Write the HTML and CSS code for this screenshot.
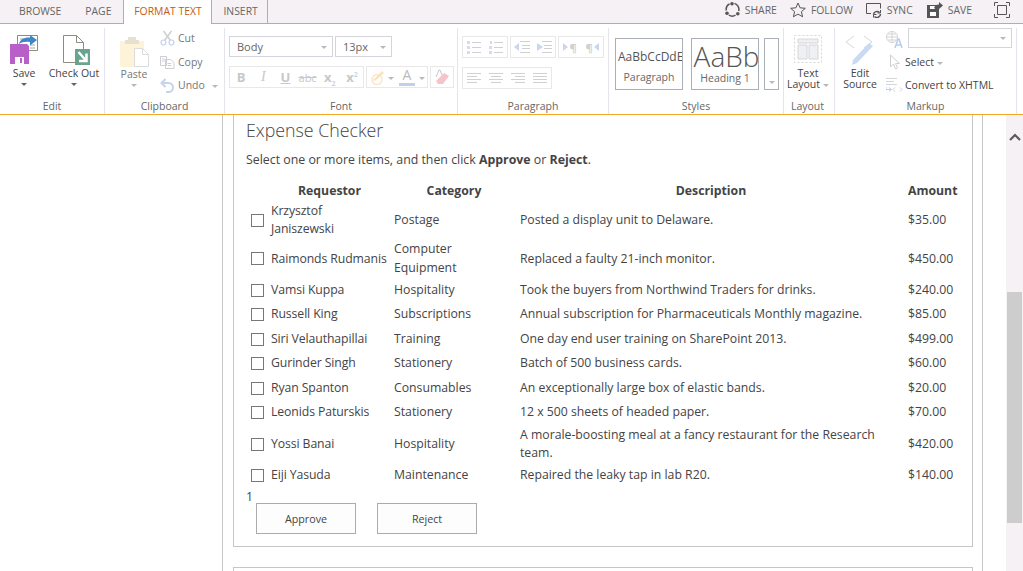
FILE: index.html
```html
<!DOCTYPE html>
<html lang="en">
<head>
   <meta charset="UTF-8">
   <title>Expense Checker</title>
   <link rel="stylesheet" href="styles.css">
</head>
<body>

   <!-- top tabs -->
   <div class="topbar">
      <div class="tabs">
         <a class="tab first">BROWSE</a>
         <a class="tab">PAGE</a>
         <a class="tab active">FORMAT TEXT</a>
         <a class="tab last">INSERT</a>
      </div>
      <div class="actions">
         <a class="action share">
            <svg width="15" height="15" viewBox="0 0 15 15" fill="none" stroke="#555" stroke-width="1.500"><path d="M4.500 1.800A6.300 6.300 0 0 0 1.300 8.500"/><path d="M3.800 13A6.300 6.300 0 0 0 10.500 13.200"/><path d="M13.700 9A6.300 6.300 0 0 0 9.500 1.400"/><circle cx="7" cy="1.800" r="1.800" fill="#555" stroke="none"/><circle cx="2" cy="11.200" r="1.800" fill="#555" stroke="none"/><circle cx="12.800" cy="11.800" r="1.800" fill="#555" stroke="none"/></svg>
            SHARE</a>
         <a class="action follow">
            <svg width="16" height="16" viewBox="0 0 16 16" fill="none" stroke="#555"><path d="M8 1l2.100 4.800 5.200.5-3.900 3.400 1.200 5.100L8 12.100l-4.600 2.700 1.200-5.100L.7 6.300l5.200-.5z"/></svg>
            FOLLOW</a>
         <a class="action sync">
            <svg width="16" height="16" viewBox="0 0 16 16" fill="none" stroke="#555"><path d="M5 11.500H.5v-10h14v5"/><path d="M7.500 12.500a3.500 3.500 0 0 1 6-2M14.500 12a3.500 3.500 0 0 1-6 2.500" stroke-width="1.500"/><path d="M14.500 8v3h-3M7.500 15.500v-3h3"/></svg>
            SYNC</a>
         <a class="action save">
            <svg width="16" height="16" viewBox="0 0 16 16"><path d="M0 3h12v13H0z" fill="#555"/><path d="M3 4h5v3H3zM3 10h6v4H3z" fill="#fff"/><path d="M7 7c0-3 2-4.500 5-4.500V0l4 3.500L12 7V4.500C10 4.500 8 5 7 7z" fill="#555"/></svg>
            SAVE</a>
         <a class="action focus">
            <svg width="16" height="16" viewBox="0 0 16 16" fill="none" stroke="#555"><path d="M.5 4V.5H4M12 .5h3.500V4M15.500 12v3.500H12M4 15.500H.5V12"/><path d="M3.500 3.500h9v9h-9z"/></svg>
         </a>
      </div>
   </div>

   <!-- ribbon -->
   <div class="ribbon">

      <div class="group group-edit">
         <div class="group-body">
            <div class="big-btn btn-save">
               <svg width="28" height="29" viewBox="0 0 28 29"><path d="M7.500.5h20v15h-20z" fill="#fff" stroke="#8c8c80"/><path d="M10 4h7M20 13h5M20 10h5" stroke="#a8a8a0"/><path d="M9 9c1-5 6-7 11-6.500V0l7 5-7 5.500V7C15 6.500 12 7 9 9z" fill="#3f86c4"/><path d="M0 9h17l2 2v18H0z" fill="#b860c8"/><path d="M5 22h9v7H5z" fill="#fff"/><path d="M10 23h2v5h-2z" fill="#b860c8"/></svg>
               <span class="big-label">Save</span>
               <i class="arrow dark"></i>
            </div>
            <div class="big-btn btn-checkout">
               <svg width="28" height="31" viewBox="0 0 28 31"><path d="M.5.5h13l7 7v20H.5z" fill="#fff" stroke="#8c8c80"/><path d="M13.500.5v7h7" fill="none" stroke="#8c8c80"/><path d="M12 14h15v16H12z" fill="#68a48e"/><path d="M15.500 17l7 8M23.500 18.500v7.500H16" fill="none" stroke="#fff" stroke-width="2.500"/></svg>
               <span class="big-label">Check Out</span>
               <i class="arrow dark"></i>
            </div>
         </div>
         <div class="group-label">Edit</div>
      </div>

      <div class="group group-clipboard">
         <div class="group-body">
            <div class="big-btn btn-paste disabled">
               <svg width="29" height="30" viewBox="0 0 29 30"><path d="M0 4h24v26H0z" fill="#fdf3d9"/><path d="M8 0h8v3h3v4H5V3h3z" fill="#e6e0d0"/><path d="M14.500 11.500h8l6 6v12h-14z" fill="#fff" stroke="#dcdcdc"/><path d="M22.500 11.500v6h6" fill="none" stroke="#dcdcdc"/></svg>
               <span class="big-label">Paste</span>
               <i class="arrow"></i>
            </div>
            <div class="small-col">
               <div class="small-btn btn-cut">
                  <svg width="15" height="16" viewBox="0 0 15 16" fill="none" stroke="#c6d2ea" stroke-width="1.200"><circle cx="3.500" cy="12.500" r="2.500"/><circle cx="11.500" cy="12.500" r="2.500"/><path d="M4.500 10.500L11.500 1M10.500 10.500L3.500 1" stroke="#cfcfcf" stroke-width="1.500"/></svg>
                  <span>Cut</span>
               </div>
               <div class="small-btn btn-copy">
                  <svg width="15" height="14" viewBox="0 0 15 14" fill="none" stroke="#cfcfcf"><path d="M.5 1.500h6v9h-6zM5.500 4.500h5l3.500 3v6H5.500z" fill="#fff"/><path d="M7.500 8.500h4M7.500 10.500h4M2 4h3M2 6h3" stroke="#c6d2ea"/></svg>
                  <span>Copy</span>
               </div>
               <div class="small-btn btn-undo">
                  <svg width="15" height="15" viewBox="0 0 15 15" fill="none" stroke="#c4d4ee" stroke-width="2"><path d="M5.500 1L1.500 5l4 4M2 5h6.500a4.500 4.500 0 0 1 0 9H6"/></svg>
                  <span>Undo</span>
                  <i class="arrow"></i>
               </div>
            </div>
         </div>
         <div class="group-label">Clipboard</div>
      </div>

      <div class="group group-font">
         <div class="group-body rows">
            <div class="tool-row">
               <div class="select select-font">Body<i class="arrow"></i></div>
               <div class="select select-size">13px<i class="arrow"></i></div>
            </div>
            <div class="tool-row">
               <div class="tool-box box-format">
                  <span class="tool bold">B</span>
                  <span class="tool italic">I</span>
                  <span class="tool under">U</span>
                  <span class="tool strike">abc</span>
                  <span class="tool bold">x<sub>2</sub></span>
                  <span class="tool bold">x<sup>2</sup></span>
               </div>
               <div class="tool-box box-color">
                  <svg width="16" height="16" viewBox="0 0 16 16" fill="none"><circle cx="7" cy="10.500" r="5" stroke="#fbe7c8" stroke-width="1.500"/><path d="M3 11L12 2l2 2-9 8z" fill="#fbe2bd"/></svg>
                  <i class="arrow"></i>
                  <span class="font-color">A</span>
                  <i class="arrow"></i>
               </div>
               <div class="tool-box box-erase">
                  <svg width="15" height="16" viewBox="0 0 15 16"><path d="M3 15l-2-3 8-8 5 3-6 8z" fill="#f6c3cb"/><path d="M1 8l3-7h1l2 5" fill="none" stroke="#c8c8c8"/></svg>
               </div>
            </div>
         </div>
         <div class="group-label">Font</div>
      </div>

      <div class="group group-paragraph">
         <div class="group-body rows">
            <div class="tool-row">
               <div class="tool-box box-lists">
                  <svg width="14" height="14" viewBox="0 0 14 14"><path d="M5 2.500h9M5 7.500h9M5 12.500h9" stroke="#d0d0d0"/><path d="M0 1h3v3H0zM0 6h3v3H0zM0 11h3v3H0z" fill="#d3dcf0"/></svg>
                  <svg width="14" height="14" viewBox="0 0 14 14"><path d="M5 2.500h9M5 7.500h9M5 12.500h9" stroke="#d0d0d0"/><path d="M1 1h2v3H1zM0 6h3v3H0zM0 11h3v3H0z" fill="#d3dcf0"/></svg>
               </div>
               <div class="tool-box box-indent">
                  <svg width="16" height="12" viewBox="0 0 16 12"><path d="M6 .5h10M8 4.500h8M8 7.500h8M6 11.500h10" stroke="#d0d0d0"/><path d="M0 6l5-4v8z" fill="#c9d6ef"/></svg>
                  <svg width="16" height="12" viewBox="0 0 16 12"><path d="M6 .5h10M8 4.500h8M8 7.500h8M6 11.500h10" stroke="#d0d0d0"/><path d="M7 6L1 2v8z" fill="#c9d6ef"/></svg>
               </div>
               <div class="tool-box box-dir">
                  <span class="pilcrow"><b class="dir-arrow ltr"></b>¶</span>
                  <span class="pilcrow">¶<b class="dir-arrow rtl"></b></span>
               </div>
            </div>
            <div class="tool-row">
               <div class="tool-box box-align">
                  <svg width="14" height="11" viewBox="0 0 14 11"><path d="M0 .5h14M0 3.500h10M0 6.500h14M0 9.500h10" stroke="#d0d0d0"/></svg>
                  <svg width="14" height="11" viewBox="0 0 14 11"><path d="M0 .5h14M2 3.500h10M0 6.500h14M2 9.500h10" stroke="#d0d0d0"/></svg>
                  <svg width="14" height="11" viewBox="0 0 14 11"><path d="M0 .5h14M4 3.500h10M0 6.500h14M4 9.500h10" stroke="#d0d0d0"/></svg>
                  <svg width="14" height="11" viewBox="0 0 14 11"><path d="M0 .5h14M0 3.500h14M0 6.500h14M0 9.500h14" stroke="#d0d0d0"/></svg>
               </div>
            </div>
         </div>
         <div class="group-label">Paragraph</div>
      </div>

      <div class="group group-styles">
         <div class="group-body">
            <div class="style-tile tile-para">
               <span class="sample-para">AaBbCcDdEe</span>
               <span class="tile-name">Paragraph</span>
            </div>
            <div class="style-tile tile-h1">
               <span class="sample-head">AaBb</span>
               <span class="tile-name">Heading 1</span>
            </div>
            <div class="style-more"><i class="arrow"></i></div>
         </div>
         <div class="group-label">Styles</div>
      </div>

      <div class="group group-layout">
         <div class="group-body">
            <div class="big-btn btn-layout">
               <svg width="28" height="28" viewBox="0 0 28 28" fill="none"><path d="M.5.500h27v27H.5z" stroke="#d6d6d6" stroke-dasharray="2 2"/><path d="M4 4h20v4H4zM4 10h9v14H4zM15 10h9v14h-9z" fill="#eef0f4" stroke="#d6d6d6"/></svg>
               <span class="big-label">Text<br>Layout<i class="arrow inline"></i></span>
            </div>
         </div>
         <div class="group-label">Layout</div>
      </div>

      <div class="group group-markup">
         <div class="group-body">
            <div class="big-btn btn-source">
               <svg width="31" height="31" viewBox="0 0 31 31" fill="none"><path d="M9 2L1 8l8 6M19 2l8 6-8 6" stroke="#d6d6d6"/><path d="M8 26L24 9l4 3-16 17-5 2z" fill="#c9daf2"/></svg>
               <span class="big-label">Edit<br>Source</span>
            </div>
            <div class="markup-col">
               <div class="markup-row">
                  <svg width="17" height="17" viewBox="0 0 17 17" fill="none" stroke="#d4d4d4"><circle cx="6" cy="6" r="5.500"/><path d="M0 6h12M6 0v12M2 3h8M2 9h8"/><path d="M9 17l3-9h1l3 9M10.500 14h4" stroke="#b6cdef" stroke-width="1.500"/></svg>
                  <div class="select select-lang"><i class="arrow"></i></div>
               </div>
               <div class="small-btn btn-select">
                  <svg width="13" height="16" viewBox="0 0 13 16" fill="#fff" stroke="#cfcfcf"><path d="M1.500 1v12l3-3 2 5 2-1-2-4.500h4z"/></svg>
                  <span>Select<i class="arrow inline"></i></span>
               </div>
               <div class="small-btn btn-xhtml">
                  <svg width="17" height="15" viewBox="0 0 17 15" fill="none"><path d="M0 .5h11M0 3.500h8M0 6.500h11" stroke="#d6d6d6"/><path d="M0 9v2.500h5M3 9.500l2.500 2-2.500 2" stroke="#b6cdef"/><path d="M9 9.500l-2 2 2 2M14 9.500l2 2-2 2" stroke="#d0d0d0"/></svg>
                  <span>Convert to XHTML</span>
               </div>
            </div>
         </div>
         <div class="group-label">Markup</div>
      </div>
   </div>

   <!-- page -->
   <div class="main">
      <div class="leftnav"></div>
      <div class="page">
         <div class="card">
            <h2>Expense Checker</h2>
            <p class="intro">Select one or more items, and then click <b>Approve</b> or <b>Reject</b>.</p>
            <table class="expenses">
               <thead>
                  <tr>
                     <th class="col-check"></th>
                     <th class="col-name">Requestor</th>
                     <th class="col-cat">Category</th>
                     <th class="col-desc">Description</th>
                     <th class="col-amount">Amount</th>
                  </tr>
               </thead>
               <tbody>
                  <tr>
                     <td><input type="checkbox"></td>
                     <td>Krzysztof<br>Janiszewski</td>
                     <td>Postage</td>
                     <td>Posted a display unit to Delaware.</td>
                     <td>$35.00</td>
                  </tr>
                  <tr>
                     <td><input type="checkbox"></td>
                     <td>Raimonds Rudmanis</td>
                     <td>Computer Equipment</td>
                     <td>Replaced a faulty 21-inch monitor.</td>
                     <td>$450.00</td>
                  </tr>
                  <tr>
                     <td><input type="checkbox"></td>
                     <td>Vamsi Kuppa</td>
                     <td>Hospitality</td>
                     <td>Took the buyers from Northwind Traders for drinks.</td>
                     <td>$240.00</td>
                  </tr>
                  <tr>
                     <td><input type="checkbox"></td>
                     <td>Russell King</td>
                     <td>Subscriptions</td>
                     <td>Annual subscription for Pharmaceuticals Monthly magazine.</td>
                     <td>$85.00</td>
                  </tr>
                  <tr>
                     <td><input type="checkbox"></td>
                     <td>Siri Velauthapillai</td>
                     <td>Training</td>
                     <td>One day end user training on SharePoint 2013.</td>
                     <td>$499.00</td>
                  </tr>
                  <tr>
                     <td><input type="checkbox"></td>
                     <td>Gurinder Singh</td>
                     <td>Stationery</td>
                     <td>Batch of 500 business cards.</td>
                     <td>$60.00</td>
                  </tr>
                  <tr>
                     <td><input type="checkbox"></td>
                     <td>Ryan Spanton</td>
                     <td>Consumables</td>
                     <td>An exceptionally large box of elastic bands.</td>
                     <td>$20.00</td>
                  </tr>
                  <tr>
                     <td><input type="checkbox"></td>
                     <td>Leonids Paturskis</td>
                     <td>Stationery</td>
                     <td>12 x 500 sheets of headed paper.</td>
                     <td>$70.00</td>
                  </tr>
                  <tr>
                     <td><input type="checkbox"></td>
                     <td>Yossi Banai</td>
                     <td>Hospitality</td>
                     <td>A morale-boosting meal at a fancy restaurant for the Research team.</td>
                     <td>$420.00</td>
                  </tr>
                  <tr>
                     <td><input type="checkbox"></td>
                     <td>Eiji Yasuda</td>
                     <td>Maintenance</td>
                     <td>Repaired the leaky tap in lab R20.</td>
                     <td>$140.00</td>
                  </tr>
               </tbody>
            </table>
            <div class="count">1</div>
            <div class="buttons">
               <button>Approve</button>
               <button>Reject</button>
            </div>
         </div>
         <div class="card-next"></div>
      </div>
      <div class="scrollbar">
         <svg class="scroll-up" width="12" height="8" viewBox="0 0 12 8" fill="none" stroke="#5a5a5a" stroke-width="2.200"><path d="M1 7l5-5 5 5"/></svg>
         <div class="scroll-thumb"></div>
      </div>
   </div>

</body>
</html>
```

FILE: styles.css
```css
html, body {
   height: 100%;
}

body {
   margin: 0;
   overflow: hidden;
   background-color: #fff;
   color: #444;
   font-family: "Open Sans", "Noto Sans", sans-serif;
   font-size: 12.25px;
}

/* top bar */
.topbar {
   display: flex;
   justify-content: space-between;
   height: 23px;
   background-color: #f5f1f5;
   border-bottom: 1px solid #f5a623;
}

.tabs {
   display: flex;
}

.tab {
   height: 23px;
   padding: 0 12px;
   line-height: 23px;
   font-size: 10.4px;
   color: #666;
}

.tab.first {
   margin-left: 7px;
}

.tab.active {
   height: 24px;
   width: 89px;
   box-sizing: border-box;
   padding: 0;
   text-align: center;
   background-color: #fff;
   border-left: 1px solid #f5a623;
   border-right: 1px solid #f5a623;
   color: #c55a11;
}

.tab.last {
   width: 56px;
   box-sizing: border-box;
   padding: 0 0 0 11px;
   border-right: 1px solid #f5a623;
}

.actions {
   display: flex;
   padding-right: 13px;
}

.action {
   display: flex;
   align-items: center;
   gap: 5px;
   height: 19px;
   font-size: 10.4px;
   color: #666;
}

.action.follow {
   margin-left: 13px;
}

.action.sync {
   margin-left: 13px;
}

.action.save {
   margin-left: 14px;
}

.action.focus {
   margin-left: 22px;
}

/* ribbon */
.ribbon {
   display: flex;
   height: 90px;
   border-bottom: 1px solid #f5a623;
   font-size: 10.5px;
   color: #444;
}

.group {
   display: flex;
   flex-direction: column;
   box-sizing: border-box;
   margin-top: 4px;
   border-right: 1px solid #e4e4ea;
}

.group-body {
   display: flex;
   height: 70px;
}

.group-body.rows {
   flex-direction: column;
   gap: 9px;
   padding: 8px 0 0 4px;
}

.group-label {
   height: 16px;
   line-height: 16px;
   text-align: center;
   color: #666;
}

.group-edit { width: 105px; }
.group-clipboard { width: 120px; }
.group-font { width: 233px; }
.group-paragraph { width: 151px; }
.group-styles { width: 175px; }
.group-layout { width: 51px; }
.group-markup { width: 182px; }

.group-layout .group-label {
   padding-right: 3px;
}

.big-btn {
   display: flex;
   flex-direction: column;
   align-items: center;
   padding-top: 7px;
   text-align: center;
   line-height: 11px;
}

.big-label {
   margin-top: 3px;
   white-space: nowrap;
}

.disabled .big-label {
   color: #777;
}

.btn-save {
   width: 28px;
   margin-left: 10px;
}

.btn-save .big-label {
   margin-top: 4px;
}

.btn-checkout {
   width: 50px;
   margin-left: 11px;
}

.btn-checkout svg {
   margin-left: 5px;
}

.btn-checkout .big-label {
   margin-top: 2px;
}

.btn-paste {
   width: 30px;
   margin-left: 14px;
   padding-top: 9px;
}

.btn-paste .big-label {
   margin-top: 2px;
}

.btn-layout {
   width: 50px;
   padding-right: 2px;
   box-sizing: border-box;
}

.btn-layout .big-label {
   margin-top: 5px;
}

.btn-source {
   width: 50px;
   padding-top: 6px;
}

/* the small grey dropdown triangle */
.arrow {
   display: block;
   width: 0;
   height: 0;
   margin-top: 4px;
   border-left: 3px solid transparent;
   border-right: 3px solid transparent;
   border-top: 3px solid #b9b9b9;
}

.arrow.dark {
   border-top-color: #666;
}

.arrow.inline {
   display: inline-block;
   margin: 0 0 0 3px;
   vertical-align: middle;
}

.small-col {
   display: flex;
   flex-direction: column;
   gap: 8px;
   margin-left: 11px;
   padding-top: 2px;
}

.small-btn {
   display: flex;
   align-items: center;
   gap: 3px;
   height: 16px;
   white-space: nowrap;
}

.small-col .small-btn span {
   color: #777;
}

.btn-undo {
   margin-top: -1px;
}

.btn-undo .arrow {
   margin: 2px 0 0 4px;
}

/* font and paragraph toolbars */
.tool-row {
   display: flex;
   gap: 2px;
}

.select {
   display: flex;
   align-items: center;
   justify-content: space-between;
   box-sizing: border-box;
   height: 21px;
   padding: 0 5px 0 7px;
   border: 1px solid #d4d4dc;
   font-size: 11px;
   color: #666;
}

.select .arrow {
   margin-top: 1px;
}

.select-font {
   width: 104px;
}

.select-size {
   width: 57px;
}

.select-lang {
   width: 104px;
   height: 20px;
   justify-content: flex-end;
}

.tool-box {
   display: flex;
   align-items: center;
   box-sizing: border-box;
   height: 22px;
   border: 1px solid #e8e8e8;
   color: #c8c8c8;
}

.box-format {
   width: 135px;
   font-size: 13px;
}

.box-format .tool {
   flex: 1;
   text-align: center;
}

.box-color {
   gap: 2px;
   width: 62px;
   padding-left: 3px;
}

.box-color .arrow {
   margin-top: 2px;
}

.box-erase {
   justify-content: center;
   width: 24px;
}

.box-lists {
   justify-content: space-around;
   width: 46px;
}

.box-indent {
   justify-content: space-around;
   width: 46px;
}

.box-dir {
   justify-content: space-around;
   width: 46px;
}

.box-align {
   justify-content: space-around;
   width: 90px;
}

.tool.bold {
   font-weight: 700;
}

.tool.italic {
   font-family: "Liberation Serif", serif;
   font-style: italic;
   font-size: 14px;
}

.tool.under {
   font-weight: 700;
   text-decoration: underline;
}

.tool.strike {
   font-size: 11px;
   text-decoration: line-through;
}

.tool sub, .tool sup {
   font-size: 7px;
   color: #c9d6ef;
   line-height: 0;
}

.font-color {
   width: 16px;
   height: 15px;
   margin: 0 2px 0 3px;
   border-bottom: 3px solid #c3cfea;
   line-height: 13px;
   text-align: center;
   font-size: 14px;
   color: #bbb;
}

.pilcrow {
   display: flex;
   align-items: center;
   gap: 1px;
   font-size: 11px;
   font-weight: 700;
   color: #d0d0d0;
}

.dir-arrow {
   width: 0;
   height: 0;
   border-top: 4px solid transparent;
   border-bottom: 4px solid transparent;
}

.dir-arrow.ltr {
   border-left: 5px solid #c9d6ef;
}

.dir-arrow.rtl {
   border-right: 5px solid #c9d6ef;
}

/* styles gallery */
.group-styles .group-body {
   gap: 8px;
   padding: 10px 0 0 6px;
   box-sizing: border-box;
}

.style-tile {
   display: flex;
   flex-direction: column;
   align-items: center;
   box-sizing: border-box;
   width: 68px;
   height: 52px;
   overflow: hidden;
   border: 1px solid #abb0b8;
   line-height: 1;
}

.tile-para {
   align-items: flex-start;
}

.sample-para {
   margin: 12px 0 0 2px;
   white-space: nowrap;
   font-size: 12px;
   color: #555;
}

.sample-head {
   margin: 3px 0 0 3px;
   white-space: nowrap;
   font-size: 28px;
   font-weight: 300;
   color: #555;
}

.tile-name {
   margin-top: 9px;
   color: #666;
}

.tile-para .tile-name {
   align-self: center;
}

.tile-h1 .tile-name {
   margin-top: 3px;
}

.style-more {
   display: flex;
   align-items: flex-end;
   justify-content: center;
   box-sizing: border-box;
   width: 15px;
   height: 52px;
   margin-left: -3px;
   padding-bottom: 5px;
   border: 1px solid #abb0b8;
}

/* markup group */
.markup-col {
   display: flex;
   flex-direction: column;
   margin-left: 1px;
}

.markup-row {
   display: flex;
   gap: 5px;
   align-items: flex-start;
   height: 26px;
}

.markup-row svg {
   margin-top: 3px;
}

.btn-select {
   gap: 3px;
   height: 16px;
   padding-left: 3px;
}

.btn-xhtml {
   height: 16px;
   margin-top: 7px;
   gap: 2px;
}

/* page content */
.main {
   display: flex;
   height: 456px;
   overflow: hidden;
}

.leftnav {
   width: 222px;
}

.page {
   box-sizing: border-box;
   width: 761px;
   padding-left: 10px;
   border-left: 1px solid #c6c6c6;
   border-right: 1px solid #c6c6c6;
}

.card {
   box-sizing: border-box;
   width: 740px;
   height: 432px;
   padding: 3px 12px 0;
   border: 1px solid #c6c6c6;
   border-top: 0;
}

.card-next {
   width: 740px;
   box-sizing: border-box;
   height: 40px;
   margin-top: 20px;
   border: 1px solid #c6c6c6;
}

h2 {
   margin: 0;
   font-size: 17.8px;
   font-weight: 300;
   line-height: 24px;
   color: #444;
}

.intro {
   margin: 9px 0 0;
   line-height: 18px;
   font-size: 12.35px;
}

.expenses {
   width: 714px;
   margin-top: 10px;
   border-collapse: collapse;
   table-layout: fixed;
}

.expenses th {
   height: 22px;
   padding: 0 3px;
   text-align: center;
   font-weight: 700;
}

.expenses td {
   height: 22.5px;
   padding: 1px 3px;
   line-height: 18.2px;
   vertical-align: middle;
}

/* the name column runs a bit tight in this font */
.expenses td:nth-child(2) {
   letter-spacing: -0.1px;
}

.col-check { width: 16px; }
.col-name { width: 117px; }
.col-cat { width: 120px; }
.col-desc { width: 382px; }
.col-amount { width: 49px; }

.expenses input {
   display: block;
   width: 13px;
   height: 13px;
   margin: 0 0 0 2px;
   appearance: none;
   background-color: #fff;
   border: 1px solid #777;
   border-radius: 0;
}

.count {
   height: 15.3px;
   line-height: 18px;
}

.buttons {
   display: flex;
   gap: 21px;
   padding-left: 10px;
}

button {
   width: 100px;
   height: 31px;
   background-color: #fdfdfd;
   border: 1px solid #ababab;
   font-family: inherit;
   font-size: 10.7px;
   color: #444;
}

/* scrollbar */
.scrollbar {
   display: flex;
   flex-direction: column;
   align-items: center;
   width: 17px;
   margin-left: 23px;
   background-color: #f5f1f5;
}

.scroll-up {
   margin-top: 18px;
}

.scroll-thumb {
   width: 15px;
   height: 231px;
   margin-top: 151px;
   background-color: #cdcdcd;
}
```
